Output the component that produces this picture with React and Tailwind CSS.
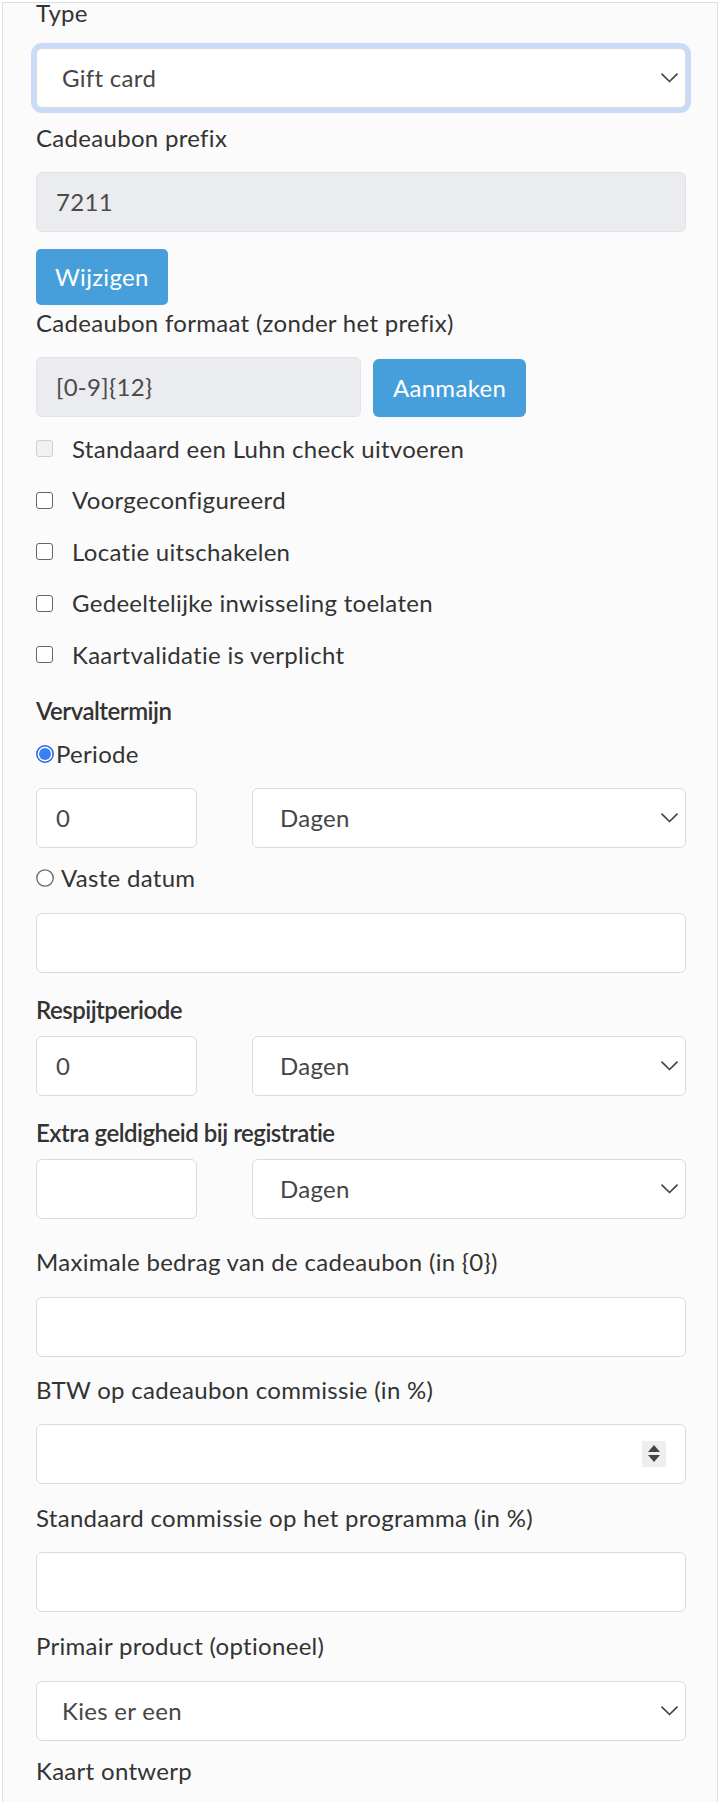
import React from 'react';

const font = { fontFamily: 'Lato, "Noto Sans", sans-serif' };

const Chevron = () => (
  <svg width="17" height="10" viewBox="0 0 17 10" fill="none">
    <path d="M1 1.2l7.5 7.3 7.5-7.3" stroke="#444" strokeWidth="1.7" strokeLinecap="round" strokeLinejoin="round" />
  </svg>
);

const Select = ({ value, focus = false, className = '', pad = 'pl-[25px]' }) => (
  <div
    className={`h-[60px] rounded-[6px] border border-[#dadada] bg-white flex items-center justify-between pr-[7px] text-[24px] text-[#454545] ${pad} ${
      focus ? 'shadow-[0_0_0_5px_#c9dbf8] border-[#c9dbf8]' : ''
    } ${className}`}
  >
    <span>{value}</span>
    <Chevron />
  </div>
);

const Input = ({ value = '', disabled = false, className = '', children }) => (
  <div
    className={`h-[60px] rounded-[6px] border flex items-center pl-[19px] text-[24px] text-[#4a4a4a] ${
      disabled ? 'bg-[#ebecf0] border-[#e2e3e7]' : 'bg-white border-[#dadada]'
    } ${className}`}
  >
    <span className="flex-1">{value}</span>
    {children}
  </div>
);

const Label = ({ children, className = '' }) => (
  <div className={`text-[24px] leading-[36px] text-[#333] ${className}`}>{children}</div>
);

const Check = ({ label, disabled = false }) => (
  <div className="h-[51.5px] flex items-center">
    <span
      className={`w-[17px] h-[17px] rounded-[3px] border-[1.5px] ${
        disabled ? 'border-[#cfcfcf] bg-[#f1f1f1]' : 'border-[#666] bg-white'
      }`}
    />
    <span className="ml-[19px] text-[24px] leading-[36px] text-[#333]">{label}</span>
  </div>
);

const Radio = ({ checked }) =>
  checked ? (
    <svg width="18" height="18" viewBox="0 0 18 18">
      <circle cx="9" cy="9" r="8.2" fill="white" stroke="#2563d9" strokeWidth="1.5" />
      <circle cx="9" cy="9" r="6" fill="#3b7ff3" />
    </svg>
  ) : (
    <svg width="18" height="18" viewBox="0 0 18 18">
      <circle cx="9" cy="9" r="8.2" fill="white" stroke="#666" strokeWidth="1.3" />
    </svg>
  );

const Spinner = () => (
  <div className="w-[24px] h-[26px] bg-[#eeeeee] flex flex-col items-center justify-center gap-[3px] mr-[19px]">
    <svg width="12" height="7" viewBox="0 0 12 7"><path d="M6 0L12 7H0z" fill="#444" /></svg>
    <svg width="12" height="7" viewBox="0 0 12 7"><path d="M0 0h12L6 7z" fill="#444" /></svg>
  </div>
);

const PeriodRow = ({ value, className = '' }) => (
  <div className={`flex ${className}`}>
    <Input value={value} className="w-[161px]" />
    <Select value="Dagen" pad="pl-[27px]" className="flex-1 ml-[55px]" />
  </div>
);

export default function App() {
  return (
    <div className="w-[726px] min-h-[1802px] bg-white pt-[2px] tracking-[0.3px]" style={font}>
      <div className="ml-[2px] w-[716px] min-h-[1800px] border-t border-l border-r border-[#dedede] bg-[#fbfbfb] pl-[33px] pr-[31px]">
        <div className="text-[24px] leading-[20px] text-[#333]">Type</div>
        <Select value="Gift card" focus className="mt-[25px]" />

        <Label className="mt-[12px]">Cadeaubon prefix</Label>
        <Input value="7211" disabled className="mt-[16px]" />
        <button className="mt-[17px] h-[56px] px-[19px] rounded-[5px] bg-[#469fdb] text-white text-[24px] tracking-[0.3px]">
          Wijzigen
        </button>

        <Label>Cadeaubon formaat (zonder het prefix)</Label>
        <div className="mt-[16px] flex items-start">
          <Input value="[0-9]{12}" disabled className="w-[325px]" />
          <button className="ml-[12px] mt-[2px] h-[58px] w-[153px] rounded-[6px] bg-[#469fdb] text-white text-[24px] tracking-[0.3px]">
            Aanmaken
          </button>
        </div>

        <div className="mt-[6px]">
          <Check label="Standaard een Luhn check uitvoeren" disabled />
          <Check label="Voorgeconfigureerd" />
          <Check label="Locatie uitschakelen" />
          <Check label="Gedeeltelijke inwisseling toelaten" />
          <Check label="Kaartvalidatie is verplicht" />
        </div>

        <Label className="mt-[12px] font-semibold tracking-[-0.5px]">Vervaltermijn</Label>
        <div className="mt-[7px] flex items-center text-[24px] leading-[36px] text-[#333]">
          <Radio checked />
          <span className="ml-[2px]">Periode</span>
        </div>
        <PeriodRow value="0" className="mt-[16px]" />
        <div className="mt-[12px] flex items-center text-[24px] leading-[36px] text-[#333]">
          <Radio />
          <span className="ml-[7px]">Vaste datum</span>
        </div>
        <Input className="mt-[17px]" />

        <Label className="mt-[19px] font-semibold tracking-[-0.5px]">Respijtperiode</Label>
        <PeriodRow value="0" className="mt-[8px]" />

        <Label className="mt-[19px] font-semibold tracking-[-0.5px]">Extra geldigheid bij registratie</Label>
        <PeriodRow value="" className="mt-[8px]" />

        <Label className="mt-[25px]">Maximale bedrag van de cadeaubon (in {'{0}'})</Label>
        <Input className="mt-[17px]" />

        <Label className="mt-[15px]">BTW op cadeaubon commissie (in %)</Label>
        <Input className="mt-[16px]">
          <Spinner />
        </Input>

        <Label className="mt-[16px]">Standaard commissie op het programma (in %)</Label>
        <Input className="mt-[16px]" />

        <Label className="mt-[16px]">Primair product (optioneel)</Label>
        <Select value="Kies er een" className="mt-[17px]" />

        <Label className="mt-[12px]">Kaart ontwerp</Label>
      </div>
    </div>
  );
}
